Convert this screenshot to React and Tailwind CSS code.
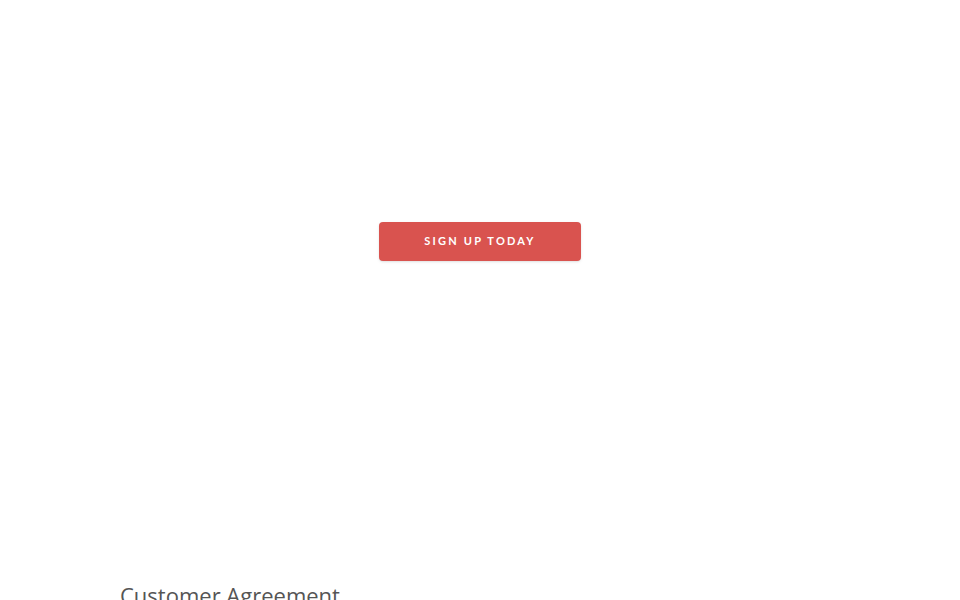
export default function App() {
  return (
    <div className="min-h-screen bg-white" style={{ fontFamily: '"Lato", "Open Sans", sans-serif' }}>
      {/* HERO */}
      <section className="h-[482px] flex justify-center pt-[222px]">
        <button className="w-[202px] h-[39px] rounded-[4px] bg-[#d9534f] text-white text-[11px] font-bold uppercase tracking-[0.2em] shadow-sm">
          Sign up today
        </button>
      </section>

      {/* AGREEMENT */}
      <section className="max-w-[720px] mx-auto pt-[100px]">
        <h2 className="text-[22px] leading-[26px] text-[#555] font-normal" style={{ fontFamily: '"Open Sans", sans-serif' }}>
          Customer Agreement
        </h2>
      </section>
    </div>
  );
}
